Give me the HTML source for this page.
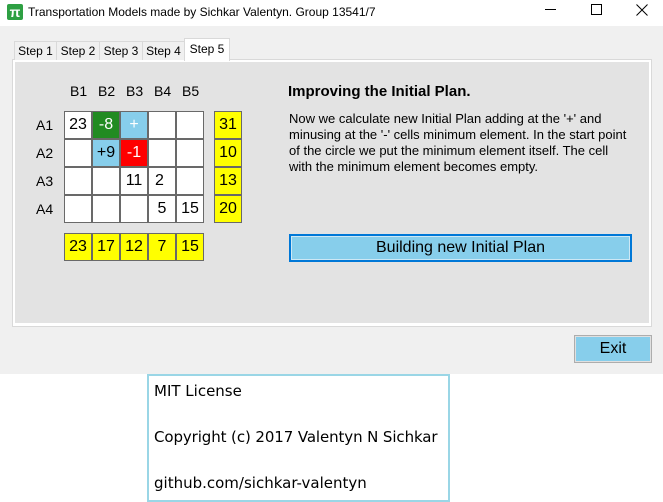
<!DOCTYPE html>
<html><head><meta charset="utf-8"><style>
*{margin:0;padding:0;box-sizing:border-box}
body{width:663px;height:502px;background:#fff;font-family:"Liberation Sans",Arial,sans-serif;position:relative;overflow:hidden}
.a{position:absolute}
.win{left:0;top:0;width:663px;height:374px;background:#f0f0f0}
.title{left:0;top:0;width:663px;height:26px;background:#fff}
.tab{position:absolute;top:41px;height:19px;border:1px solid #d9d9d9;border-bottom:none;background:#f0f0f0;font-size:12px;text-align:center;line-height:18px;color:#000}
.panel{left:12px;top:59px;width:640px;height:268px;background:#fff;border:1px solid #d9d9d9}
.inner{left:15px;top:62px;width:634px;height:261px;background:#e3e3e3}
.c{position:absolute;width:28px;height:28px;border:1px solid #696969;background:#fff;font-size:16px;line-height:26px;text-align:center;color:#000}
.y{background:#ff0}
.lb{position:absolute;font-size:14px;color:#000}
</style></head><body>
<div class="a win"></div>
<div class="a title"></div>
<div class="a" style="left:7px;top:4px;width:16px;height:16px;background:#2ea043;border-radius:2px;color:#fff;font-size:14px;line-height:16px;text-align:center;font-weight:bold">π</div>
<div class="a" style="left:28px;top:5px;font-size:12px;color:#000">Transportation Models made by Sichkar Valentyn. Group 13541/7</div>
<div class="a" style="left:545px;top:9px;width:11px;height:1px;background:#000"></div>
<div class="a" style="left:591px;top:4px;width:11px;height:11px;border:1px solid #000"></div>
<svg class="a" style="left:636px;top:4px" width="12" height="12"><path d="M0.5 0.5L11.5 11.5M11.5 0.5L0.5 11.5" stroke="#000" stroke-width="1"/></svg>
<div class="a panel"></div>
<div class="a inner"></div>
<div class="tab" style="left:14px;width:43px">Step 1</div>
<div class="tab" style="left:56px;width:44px">Step 2</div>
<div class="tab" style="left:99px;width:44px">Step 3</div>
<div class="tab" style="left:142px;width:43px">Step 4</div>
<div class="tab" style="left:184px;top:38px;height:23px;width:46px;background:#fff;line-height:20px">Step 5</div>

<div class="lb" style="left:70px;top:83px">B1</div>
<div class="lb" style="left:98px;top:83px">B2</div>
<div class="lb" style="left:126px;top:83px">B3</div>
<div class="lb" style="left:154px;top:83px">B4</div>
<div class="lb" style="left:182px;top:83px">B5</div>
<div class="lb" style="left:36px;top:117px">A1</div>
<div class="lb" style="left:36px;top:145px">A2</div>
<div class="lb" style="left:36px;top:173px">A3</div>
<div class="lb" style="left:36px;top:201px">A4</div>

<div class="c" style="left:64px;top:111px">23</div>
<div class="c" style="left:92px;top:111px;background:#228b22;color:#fff">-8</div>
<div class="c" style="left:120px;top:111px;background:#87ceeb;color:#fff">+</div>
<div class="c" style="left:148px;top:111px"></div>
<div class="c" style="left:176px;top:111px"></div>
<div class="c" style="left:64px;top:139px"></div>
<div class="c" style="left:92px;top:139px;background:#87ceeb">+9</div>
<div class="c" style="left:120px;top:139px;background:#f00;color:#fff">-1</div>
<div class="c" style="left:148px;top:139px"></div>
<div class="c" style="left:176px;top:139px"></div>
<div class="c" style="left:64px;top:167px"></div>
<div class="c" style="left:92px;top:167px"></div>
<div class="c" style="left:120px;top:167px">11</div>
<div class="c" style="left:148px;top:167px;text-align:left;padding-left:6px">2</div>
<div class="c" style="left:176px;top:167px"></div>
<div class="c" style="left:64px;top:195px"></div>
<div class="c" style="left:92px;top:195px"></div>
<div class="c" style="left:120px;top:195px"></div>
<div class="c" style="left:148px;top:195px">5</div>
<div class="c" style="left:176px;top:195px">15</div>

<div class="c y" style="left:214px;top:111px">31</div>
<div class="c y" style="left:214px;top:139px">10</div>
<div class="c y" style="left:214px;top:167px">13</div>
<div class="c y" style="left:214px;top:195px">20</div>

<div class="c y" style="left:64px;top:233px">23</div>
<div class="c y" style="left:92px;top:233px">17</div>
<div class="c y" style="left:120px;top:233px">12</div>
<div class="c y" style="left:148px;top:233px">7</div>
<div class="c y" style="left:176px;top:233px">15</div>

<div class="a" style="left:288px;top:83px;font-size:15px;font-weight:bold;color:#000">Improving the Initial Plan.</div>
<div class="a" style="left:289px;top:111px;width:340px;font-size:13px;line-height:16px;color:#000">Now we calculate new Initial Plan adding at the '+' and minusing at the '-' cells minimum element. In the start point of the circle we put the minimum element itself. The cell with the minimum element becomes empty.</div>

<div class="a" style="left:289px;top:234px;width:343px;height:28px;border:2px solid #0078d7;background:#87ceeb;font-size:16px;line-height:23px;text-align:center;color:#000;box-shadow:inset 0 0 0 1px #cde8f5">Building new Initial Plan</div>
<div class="a" style="left:574px;top:335px;width:78px;height:28px;border:1px solid #adadad;background:#87ceeb;font-size:16px;line-height:26px;text-align:center;color:#000;box-shadow:inset 0 0 0 1px #e0e0e0">Exit</div>

<div class="a" style="left:147px;top:374px;width:303px;height:128px;border:2px solid #9ad6e6;background:#fff;font-family:'DejaVu Sans','Liberation Sans',sans-serif;font-size:15px;color:#000">
<div class="a" style="left:5px;top:6px">MIT License</div>
<div class="a" style="left:5px;top:52px;white-space:nowrap;letter-spacing:-0.1px">Copyright (c) 2017 Valentyn N Sichkar</div>
<div class="a" style="left:5px;top:98px">github.com/sichkar-valentyn</div>
</div>
</body></html>
